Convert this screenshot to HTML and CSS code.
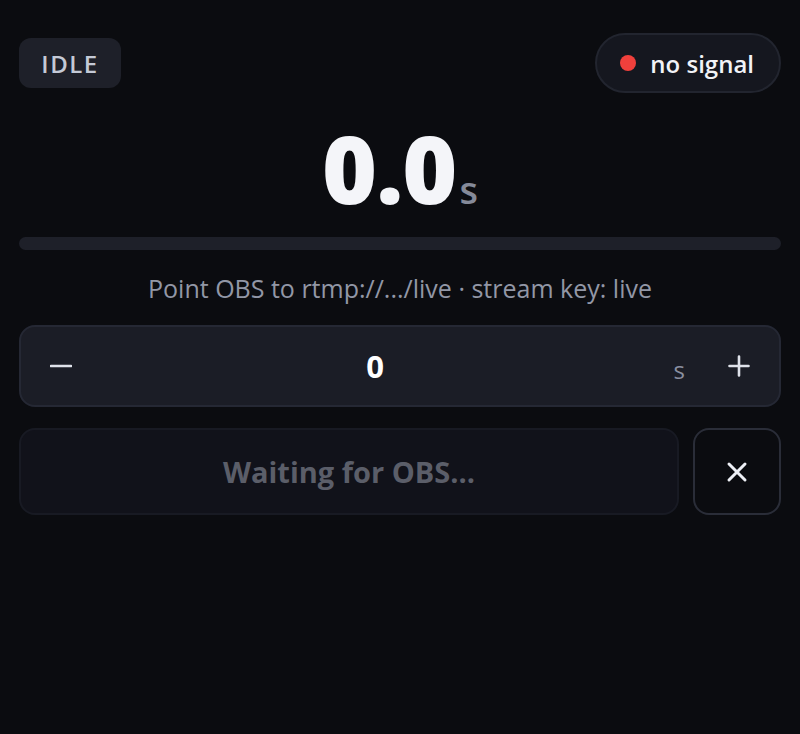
FILE: index.html
```html
<!DOCTYPE html>
<html>

<head>
  <title>Stream Timer</title>
  <link rel="stylesheet" href="styles.css">
</head>

<body>
  <div id="app">
    <div id="top">
      <span id="state">IDLE</span>
      <span id="signal"><span class="dot"></span>no signal</span>
    </div>

    <div id="clock"><span id="time">0.0</span><span class="unit">s</span></div>

    <div id="progress"><div id="progress-fill"></div></div>

    <p id="hint">Point OBS to rtmp://.../live · stream key: live</p>

    <div id="stepper">
      <button class="step">
        <svg width="22" height="22" viewBox="0 0 22 22">
          <path d="M1 11 H21" stroke="#dfe2ea" stroke-width="2.6" stroke-linecap="round" />
        </svg>
      </button>
      <span id="amount">0</span>
      <span class="step-unit">s</span>
      <button class="step">
        <svg width="22" height="22" viewBox="0 0 22 22">
          <path d="M1.5 11 H20.5 M11 1.5 V20.5" stroke="#dfe2ea" stroke-width="2.6" stroke-linecap="round" />
        </svg>
      </button>
    </div>

    <div id="actions">
      <button id="go" disabled>Waiting for OBS...</button>
      <button id="cancel">
        <svg width="22" height="22" viewBox="0 0 22 22">
          <path d="M3 3 L19 19 M19 3 L3 19" stroke="#eef0f6" stroke-width="3" stroke-linecap="round" />
        </svg>
      </button>
    </div>
  </div>
</body>

</html>
```

FILE: styles.css
```css
body {
  margin: 0;
  background-color: #0b0c10;
  color: #eef0f6;
  font-family: 'Open Sans', 'Noto Sans', sans-serif;
}

#app {
  padding: 33px 19px 0 19px;
}

#top {
  display: flex;
  justify-content: space-between;
  align-items: center;
}

#state {
  display: inline-flex;
  align-items: center;
  justify-content: center;
  width: 102px;
  height: 50px;
  box-sizing: border-box;
  border-radius: 12px;
  background: #1e2029;
  color: #c4c9d6;
  font-size: 24px;
  font-weight: 600;
  letter-spacing: 1.5px;
}

#signal {
  display: inline-flex;
  align-items: center;
  gap: 14px;
  height: 60px;
  box-sizing: border-box;
  padding: 0 25px 0 23px;
  border-radius: 30px;
  background: #15171f;
  border: 2px solid #22252f;
  font-size: 24px;
  font-weight: 600;
  color: #f2f3f7;
}

.dot {
  width: 16px;
  height: 16px;
  border-radius: 50%;
  background: #f0403c;
}

#clock {
  text-align: center;
  margin-top: 28px;
  line-height: 1;
}

#time {
  font-size: 94px;
  font-weight: 800;
  letter-spacing: -1px;
  color: #f4f5f9;
}

.unit {
  font-size: 38px;
  font-weight: 600;
  color: #858a99;
  margin-left: 3px;
}

#progress {
  margin-top: 22px;
  height: 13px;
  border-radius: 7px;
  background: #1e2029;
}

#progress-fill {
  width: 0;
  height: 100%;
}

#hint {
  margin: 21px 0 20px;
  text-align: center;
  font-size: 25px;
  color: #9297a6;
}

#stepper {
  display: flex;
  align-items: center;
  height: 82px;
  box-sizing: border-box;
  border-radius: 16px;
  background: #1b1d26;
  border: 2px solid #252834;
}

.step {
  width: 80px;
  height: 100%;
  background: none;
  border: none;
  display: flex;
  align-items: center;
  justify-content: center;
}

#amount {
  flex: 1;
  text-align: center;
  font-size: 31px;
  font-weight: 700;
  color: #ffffff;
}

.step-unit {
  width: 50px;
  box-sizing: border-box;
  padding: 6px 14px 0 0;
  text-align: right;
  font-size: 24px;
  color: #8a8fa0;
}

#actions {
  display: flex;
  gap: 14px;
  margin-top: 21px;
}

#go {
  flex: 1;
  height: 87px;
  border-radius: 16px;
  background: #11121a;
  border: 2px solid #181a23;
  color: #5b5e69;
  font-family: inherit;
  font-size: 29px;
  font-weight: 700;
}

#cancel {
  width: 88px;
  height: 87px;
  border-radius: 16px;
  background: #0b0c10;
  border: 2px solid #2a2d38;
  display: flex;
  align-items: center;
  justify-content: center;
}
```
